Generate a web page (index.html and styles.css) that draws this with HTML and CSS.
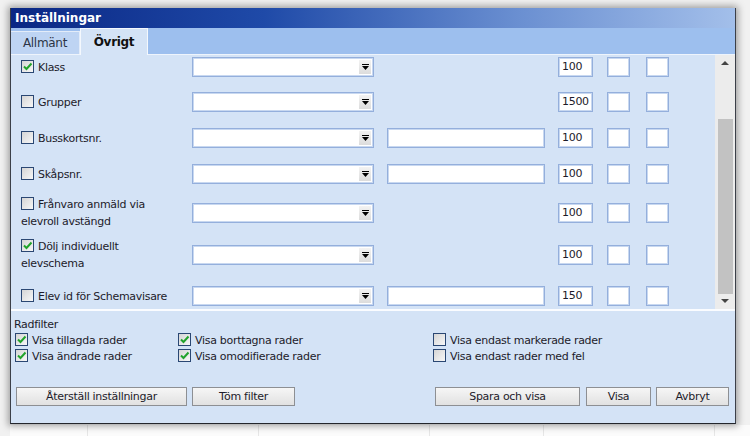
FILE: index.html
```html
<!DOCTYPE html>
<html>
<head>
    <title>Inställningar</title>
    <link rel="stylesheet" href="styles.css">
</head>
<body>
    <div class="window">
        <div class="titlebar">Inställningar</div>
        <div class="tabs">
            <div class="tab">Allmänt</div>
            <div class="tab active">Övrigt</div>
        </div>

        <div class="list">
            <div class="rows">
                <div class="row first">
                    <label class="field-label"><span class="check on"></span>Klass</label>
                    <div class="select"><span class="drop"></span></div>
                    <div></div>
                    <div class="input num">100</div>
                    <div class="input box"></div>
                    <div class="input box"></div>
                </div>
                <div class="row">
                    <label class="field-label"><span class="check"></span>Grupper</label>
                    <div class="select"><span class="drop"></span></div>
                    <div></div>
                    <div class="input num">1500</div>
                    <div class="input box"></div>
                    <div class="input box"></div>
                </div>
                <div class="row">
                    <label class="field-label"><span class="check"></span>Busskortsnr.</label>
                    <div class="select"><span class="drop"></span></div>
                    <div class="input text"></div>
                    <div class="input num">100</div>
                    <div class="input box"></div>
                    <div class="input box"></div>
                </div>
                <div class="row">
                    <label class="field-label"><span class="check"></span>Skåpsnr.</label>
                    <div class="select"><span class="drop"></span></div>
                    <div class="input text"></div>
                    <div class="input num">100</div>
                    <div class="input box"></div>
                    <div class="input box"></div>
                </div>
                <div class="row tall">
                    <label class="field-label"><span class="check"></span>Frånvaro anmäld via elevroll avstängd</label>
                    <div class="select"><span class="drop"></span></div>
                    <div></div>
                    <div class="input num">100</div>
                    <div class="input box"></div>
                    <div class="input box"></div>
                </div>
                <div class="row tall">
                    <label class="field-label"><span class="check on"></span>Dölj individuellt elevschema</label>
                    <div class="select"><span class="drop"></span></div>
                    <div></div>
                    <div class="input num">100</div>
                    <div class="input box"></div>
                    <div class="input box"></div>
                </div>
                <div class="row last">
                    <label class="field-label"><span class="check"></span>Elev id för Schemavisare</label>
                    <div class="select"><span class="drop"></span></div>
                    <div class="input text"></div>
                    <div class="input num">150</div>
                    <div class="input box"></div>
                    <div class="input box"></div>
                </div>
            </div>
            <div class="scrollbar">
                <div class="arrow up"></div>
                <div class="track"><div class="thumb"></div></div>
                <div class="arrow down"></div>
            </div>
        </div>

        <div class="filter">
            <div class="filter-title">Radfilter</div>
            <div class="filter-grid">
                <label><span class="check on"></span>Visa tillagda rader</label>
                <label><span class="check on"></span>Visa borttagna rader</label>
                <label><span class="check"></span>Visa endast markerade rader</label>
                <label><span class="check on"></span>Visa ändrade rader</label>
                <label><span class="check on"></span>Visa omodifierade rader</label>
                <label><span class="check"></span>Visa endast rader med fel</label>
            </div>
        </div>

        <div class="buttons">
            <div class="btn-group">
                <button class="btn w-reset">Återställ inställningar</button>
                <button class="btn w-clear">Töm filter</button>
            </div>
            <div class="btn-group">
                <button class="btn w-save">Spara och visa</button>
                <button class="btn w-show">Visa</button>
                <button class="btn w-cancel">Avbryt</button>
            </div>
        </div>
    </div>

    <div class="statusbar">
        <div class="cell narrow"></div>
        <div class="cell wide"></div>
        <div class="cell wide"></div>
        <div class="cell mid"></div>
        <div class="cell wide"></div>
    </div>
</body>
</html>
```

FILE: styles.css
```css
/* Page behind the dialog */
body {
    margin: 0;
    background: #f1f1f1;
    font-family: "DejaVu Sans", sans-serif;
    font-size: 11px;
    letter-spacing: -0.3px;
    color: #1d1b2a;
    overflow: hidden;
}

/* Dialog frame */
.window {
    margin: 8px 0 0 10px;
    width: 724px;
    height: 415px;
    border-left: 1px solid #3b3f48;
    border-right: 1px solid #3b3f48;
    border-bottom: 1px solid #23262c;
    background: #d4e3f6;
    box-shadow: 0 0 7px 2px rgba(0, 0, 0, 0.35);
    display: flex;
    flex-direction: column;
    position: relative;
    z-index: 1;
}

.titlebar {
    height: 20px;
    line-height: 20px;
    padding-left: 4px;
    color: #fff;
    font-weight: bold;
    font-size: 12px;
    letter-spacing: 0;
    background: linear-gradient(to right, #0a2784 0%, #1f4aa8 35%, #6a8fd1 70%, #a3bfea 100%);
}

/* Tabs */
.tabs {
    height: 26px;
    display: flex;
    align-items: flex-end;
    background: #9dbfee;
    border-bottom: 1px solid #eef4fc;
}

.tab {
    height: 23px;
    line-height: 22px;
    width: 69px;
    text-align: center;
    font-size: 12px;
    color: #2b3445;
    background: #bed4f3;
    border-top: 1px solid #e3ecf9;
    border-right: 1px solid #e3ecf9;
    box-sizing: border-box;
}

.tab.active {
    height: 27px;
    width: 68px;
    margin-bottom: -1px;
    line-height: 27px;
    font-weight: bold;
    color: #111;
    background: #d4e3f6;
    border: 1px solid #f4f8fd;
    border-bottom: none;
}

/* Scrollable field list */
.list {
    height: 254px;
    display: flex;
    border-bottom: 2px solid #fafcff;
    overflow: hidden;
}

.rows {
    flex: 1;
    padding-left: 10px;
}

.row {
    height: 36px;
    display: grid;
    grid-template-columns: 171px 195px 171px 49px 39px 23px;
    align-items: center;
}

.row.first {
    height: 24px;
    padding-bottom: 5px;
}

.row.tall {
    height: 42px;
}

.row.last {
    height: 40px;
}

.field-label {
    width: 160px;
    line-height: 17px;
}

.check {
    display: inline-block;
    width: 11px;
    height: 11px;
    margin-right: 4px;
    vertical-align: -2px;
    border: 1px solid #2a4773;
    background: linear-gradient(135deg, #d5d5d5, #f7f7f7);
}

.check.on {
    background: url("data:image/svg+xml;utf8,<svg xmlns='http://www.w3.org/2000/svg' viewBox='0 0 11 11'><path d='M2 5.5 L4.5 8 L9.5 2.5' fill='none' stroke='%2321a32b' stroke-width='2'/></svg>") no-repeat, linear-gradient(135deg, #d5d5d5, #f7f7f7);
}

.select,
.input {
    height: 20px;
    box-sizing: border-box;
    background: #fff;
    border: 1px solid #94afdc;
    box-shadow: inset 0 0 0 1px #c8d8f0;
}

.select {
    width: 182px;
    display: flex;
    justify-content: flex-end;
    padding: 2px;
}

.drop {
    width: 12px;
    background: linear-gradient(#f3f3f3, #dcdcdc);
    display: flex;
    align-items: center;
    justify-content: center;
}

.drop::after {
    content: "";
    width: 7px;
    height: 7px;
    background: url("data:image/svg+xml;utf8,<svg xmlns='http://www.w3.org/2000/svg' viewBox='0 0 7 7'><rect x='0' y='0' width='7' height='1' fill='%23000'/><path d='M0 2 H7 L3.5 6 Z' fill='%23000'/></svg>") no-repeat;
}

.input.text {
    width: 158px;
}

.input.num {
    width: 35px;
    padding-left: 3px;
    line-height: 18px;
}

.input.box {
    width: 23px;
}

.scrollbar {
    width: 20px;
    display: flex;
    flex-direction: column;
    background: #ececec;
}

.arrow {
    height: 20px;
    display: flex;
    align-items: center;
    justify-content: center;
}

.arrow::after {
    content: "";
    border-left: 4px solid transparent;
    border-right: 4px solid transparent;
}

.arrow.up::after {
    border-bottom: 4px solid #444;
}

.arrow.down::after {
    border-top: 4px solid #444;
}

.track {
    flex: 1;
    padding: 48px 2px 0 3px;
}

.thumb {
    height: 175px;
    background: #c2c2c2;
}

/* Row filter */
.filter {
    padding: 5px 0 0 3px;
}

.filter-title {
    line-height: 17px;
}

.filter-grid {
    display: grid;
    grid-template-columns: 163px 255px 200px;
    padding-left: 1px;
}

.filter-grid label {
    line-height: 16px;
}

/* Action buttons */
.buttons {
    margin-top: 22px;
    padding: 0 6px 0 5px;
    display: flex;
    justify-content: space-between;
}

.btn-group {
    display: flex;
    gap: 5px;
}

.btn {
    height: 19px;
    padding: 0;
    font-family: "DejaVu Sans", sans-serif;
    font-size: 11px;
    letter-spacing: -0.3px;
    color: #1d1b2a;
    border: 1px solid #8d8f93;
    background: linear-gradient(#f6f6f6, #e1e1e1);
}

.w-reset { width: 171px; }
.w-clear { width: 103px; }
.w-save { width: 145px; margin-right: 1px; }
.w-show { width: 65px; }
.w-cancel { width: 73px; }

/* Strip of the window behind */
.statusbar {
    margin: 1px 0 0 10px;
    height: 12px;
    display: flex;
    background: #fbfbfb;
}

.statusbar .cell {
    border-right: 1px solid #e6e6e6;
}

.statusbar .narrow { width: 77px; }
.statusbar .mid { width: 113px; }
.statusbar .wide { width: 170px; }
```
